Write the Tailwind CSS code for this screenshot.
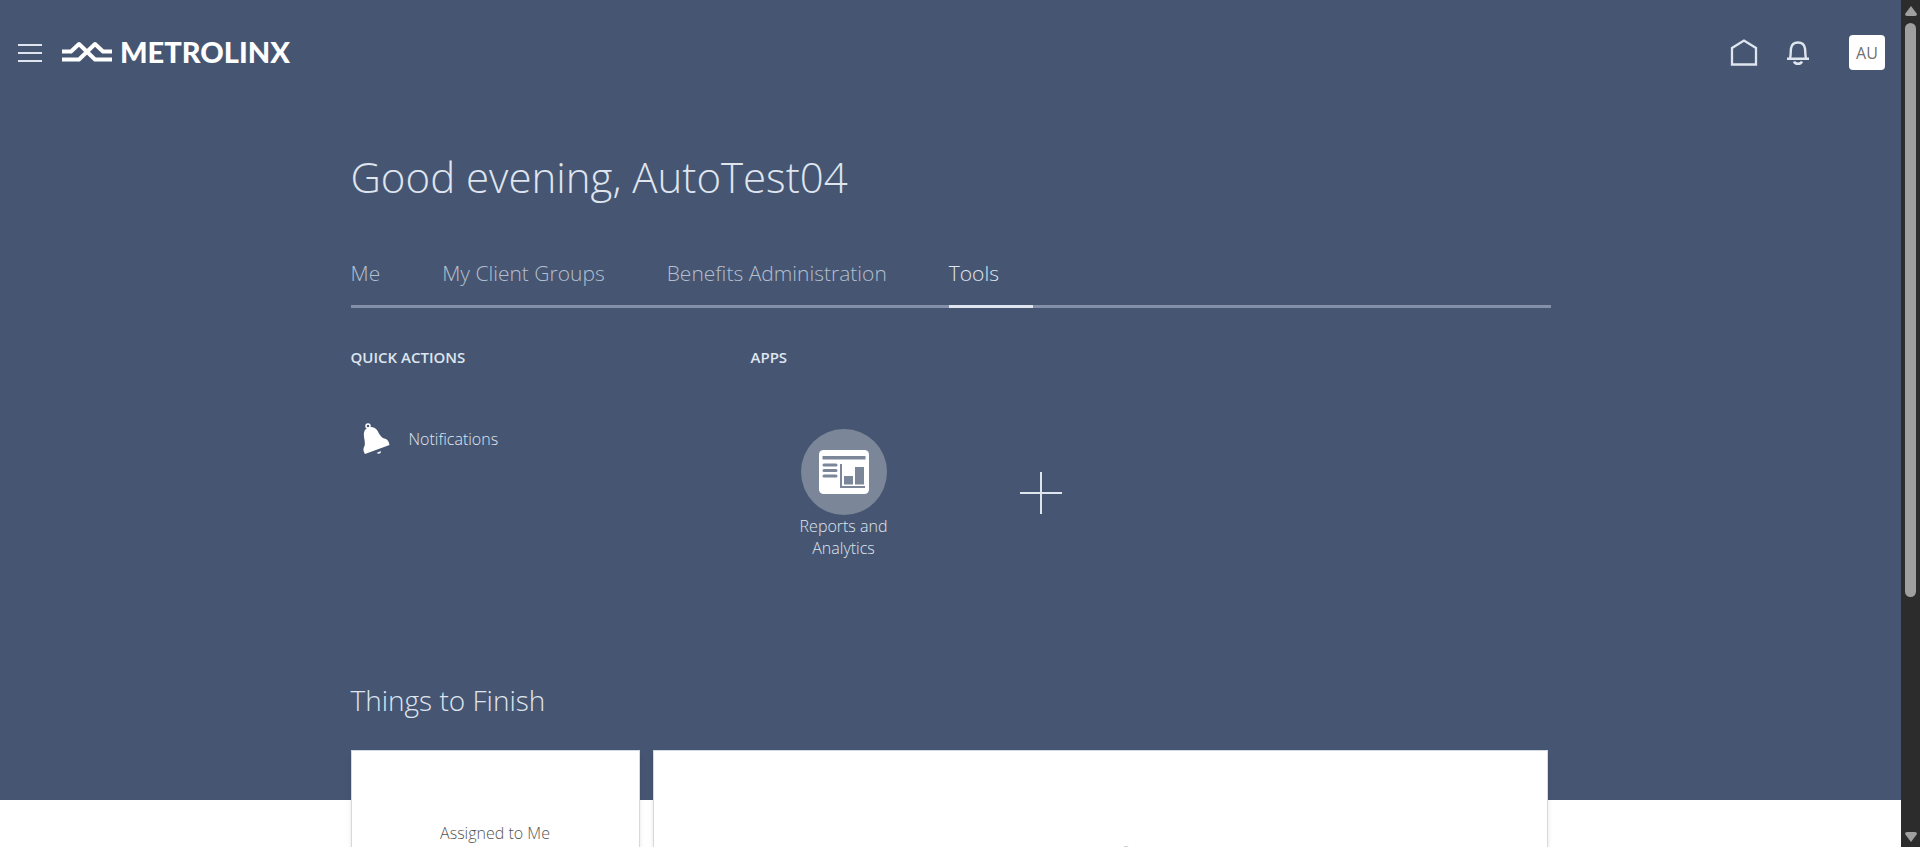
<!DOCTYPE html>
<html lang="en">
<head>
<meta charset="utf-8">
<title>Metrolinx</title>
<script src="https://cdn.jsdelivr.net/npm/@tailwindcss/browser@4"></script>
</head>
<body class="flex h-screen overflow-hidden bg-white font-['Open_Sans',sans-serif] text-[#dfe5ef]">
<div class="relative flex-1 overflow-hidden">
  <div class="flex flex-col bg-[#465672]">
    <header class="flex h-[105px] items-center pr-4 pl-[18px]">
      <button type="button" aria-label="Navigator" class="flex w-6 flex-col gap-[6px]">
        <span class="h-[2px] w-full bg-[#dfe5ef]"></span><span class="h-[2px] w-full bg-[#dfe5ef]"></span><span class="h-[2px] w-full bg-[#dfe5ef]"></span>
      </button>
      <a href="#" class="ml-5 flex items-center gap-2 pb-[2px] font-['Lato',sans-serif] text-[29px] leading-8 font-black text-white">
        <svg class="h-[21px] w-[50px]" viewBox="0 0 50 21" fill="none" stroke="currentColor" stroke-width="4" stroke-linejoin="round" aria-hidden="true">
          <path d="M0 10.500H9L17 3L33 18.500H50"/><path d="M50 10.500H41L33 3L17 18.500H0"/>
        </svg>
        METROLINX
      </a>
      <nav class="ml-auto flex items-center" aria-label="Global">
        <a href="#" aria-label="Home"><svg class="h-7 w-7" viewBox="0 0 28 28" fill="none" stroke="currentColor" stroke-width="2.300"><path d="M2 25.500V9L14 1.500L26 9V25.500Z"/></svg></a>
        <button type="button" aria-label="Notifications" class="ml-[29px]"><svg class="h-6 w-[22px]" viewBox="0 0 22 24" fill="none" stroke="currentColor" stroke-width="2.400"><path d="M0 17.800H22M3 17.500C4 14 3.500 11 4 7.500C4.600 3.500 7.500 1.500 11 1.500S17.400 3.500 18 7.500C18.500 11 18 14 19 17.500"/><path d="M7 20.500C8 23.500 14 23.500 15 20.500"/></svg></button>
        <button type="button" class="ml-10 h-[35px] w-9 rounded bg-white text-base text-[#707070]">AU</button>
      </nav>
    </header>
    <div class="mx-auto w-full max-w-[1200px]">
      <h1 class="mt-10 text-[42px] leading-[64px] font-light">Good evening, AutoTest04</h1>
      <nav class="mt-10 flex h-[59px] gap-[62px] border-b-3 border-[#8390a7] text-[21px] leading-[48px] font-light text-[#b4bfcf]" aria-label="Sections">
        <a href="#">Me</a><a href="#">My Client Groups</a><a href="#">Benefits Administration</a>
        <a href="#" aria-current="page" class="-mb-[3px] w-[84px] border-b-3 border-[#dfe5ef] text-[#dfe5ef]">Tools</a>
      </nav>
      <div class="mt-9 flex h-[317px]">
        <section class="w-[400px]">
          <h2 class="text-[15px] leading-[26px] font-semibold">QUICK ACTIONS</h2>
          <a href="#" class="mt-[53px] ml-3 flex items-center gap-[19px] text-base font-light">
            <svg class="h-8 w-[27px]" viewBox="0 0 27 32" fill="#fff" aria-hidden="true"><path d="M2 31C0 27 0 26 1.500 23C3 18-1 12 2 7C5 3 11 3 14 7C17 12 18 15 23 16C25 17 26 19 26.500 22Z"/><circle cx="5" cy="3" r="2" fill="none" stroke="#fff" stroke-width="1.500"/><path d="M13.500 30L18 28Q18 32 13.500 30"/></svg>
            Notifications
          </a>
        </section>
        <section class="flex-1">
          <h2 class="text-[15px] leading-[26px] font-semibold">APPS</h2>
          <div class="mt-[59px] flex">
            <a href="#" class="ml-[37px] flex w-[112px] flex-col items-center text-center text-base leading-[22px] font-light">
              <span class="flex size-[86px] items-center justify-center rounded-full bg-[#7b8799]">
                <svg class="h-11 w-[50px]" viewBox="0 0 50 44" aria-hidden="true"><rect width="50" height="44" rx="4.500" fill="#fff"/><path d="M3.500 6h43v3.500h-43zM25 26h9v8.500h-9zM36 17h9v17.500h-9z" fill="#7b8799"/><path d="M22 14V37H46" fill="none" stroke="#7b8799" stroke-width="2"/><path d="M5 15H17M5 20.500H17M5 26H17" fill="none" stroke="#7b8799" stroke-width="3" stroke-linecap="round"/></svg>
              </span>
              Reports and Analytics
            </a>
            <button type="button" aria-label="Add app" class="mt-[43px] ml-[120px] h-[42px]"><svg class="size-[42px]" viewBox="0 0 42 42" stroke="currentColor" stroke-width="2"><path d="M21 0V42M0 21H42"/></svg></button>
          </div>
        </section>
      </div>
      <h2 class="mt-[18px] text-[28px] leading-[42px] font-light">Things to Finish</h2>
      <div class="mt-[29px] -mb-[50px] flex h-[100px] gap-[13px] pr-[3px]">
        <section class="flex w-[289px] justify-center border-x border-t border-[#d3dae4] bg-white pt-[70px] text-base leading-6 font-light text-[#555] shadow-md">Assigned to Me</section>
        <section class="flex flex-1 items-end justify-center border-x border-t border-[#d3dae4] bg-white pb-[2px] pl-[52px] shadow-md">
          <svg class="h-[2px] w-2" viewBox="0 0 8 2" fill="#c9c9c9" aria-hidden="true"><path d="M0 2Q4-2 8 2Z"/></svg>
        </section>
      </div>
    </div>
  </div>
</div>
<div class="flex w-[19px] flex-col items-center bg-[#2c2c2c]" aria-hidden="true">
  <svg class="mt-[6px] h-[10px] w-3 shrink-0" viewBox="0 0 12 10" fill="#9f9f9f"><path d="M6 0L12 8Q12 10 10 10H2Q0 10 0 8Z"/></svg>
  <div class="mt-[7px] h-[574px] w-[11px] rounded-full bg-[#9f9f9f]"></div>
  <svg class="mt-auto mb-[5px] h-[10px] w-3 shrink-0" viewBox="0 0 12 10" fill="#9f9f9f"><path d="M6 10L12 2Q12 0 10 0H2Q0 0 0 2Z"/></svg>
</div>
</body>
</html>
